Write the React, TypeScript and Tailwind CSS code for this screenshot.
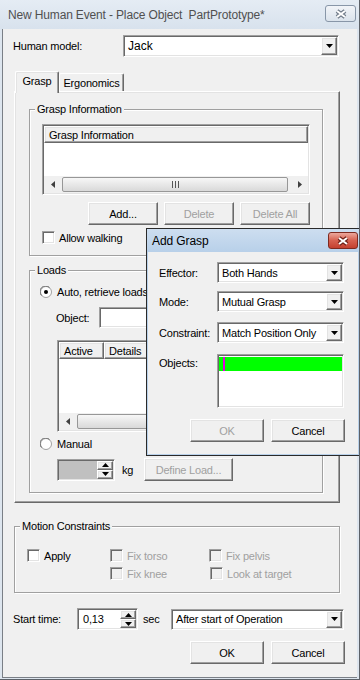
import React from 'react';

const raised =
  'border border-t-white border-l-white border-r-[#696969] border-b-[#696969] shadow-[inset_-1px_-1px_0_#a0a0a0,inset_1px_1px_0_#e3e3e3]';
const sunken =
  'border border-t-[#a0a0a0] border-l-[#a0a0a0] border-r-white border-b-white shadow-[inset_1px_1px_0_#696969,inset_-1px_-1px_0_#e3e3e3]';
const etched = 'border border-[#a0a0a0] shadow-[inset_1px_1px_0_#fff,1px_1px_0_#fff]';

function DownArrow() {
  return (
    <svg width="7" height="4" viewBox="0 0 7 4">
      <path d="M0 0h7L3.5 4z" fill="#000" />
    </svg>
  );
}

function Combo({ value, className }: { value: string; className: string }) {
  return (
    <div className={`${sunken} ${className} bg-white flex p-[1px]`}>
      <span className="flex-1 flex items-center pl-[3px] whitespace-nowrap overflow-hidden">{value}</span>
      <span className={`${raised} w-[16px] bg-[#f0f0f0] flex items-center justify-center`}>
        <DownArrow />
      </span>
    </div>
  );
}

function Btn({ label, className, disabled = false }: { label: string; className: string; disabled?: boolean }) {
  return (
    <button
      className={`${raised} ${className} bg-[#f0f0f0] flex items-center justify-center ${
        disabled ? 'text-[#a0a0a0]' : 'text-black'
      }`}
    >
      {label}
    </button>
  );
}

function Check({ label, disabled = false }: { label: string; disabled?: boolean }) {
  return (
    <div className="flex items-center gap-[4px] h-[13px]">
      <span className={`${sunken} w-[13px] h-[13px] shrink-0 ${disabled ? 'bg-[#f0f0f0]' : 'bg-white'}`} />
      <span className={`whitespace-nowrap ${disabled ? 'text-[#a0a0a0]' : ''}`}>{label}</span>
    </div>
  );
}

function Radio({ label, checked = false }: { label: string; checked?: boolean }) {
  return (
    <div className="flex items-center gap-[5px] h-[13px]">
      <svg width="12" height="12" viewBox="0 0 12 12" className="shrink-0">
        <circle cx="6" cy="6" r="5.5" fill="#fff" stroke="#a0a0a0" />
        <path d="M1.6 9.5A5 5 0 0 1 9.5 1.6" fill="none" stroke="#696969" />
        {checked && <circle cx="6" cy="6" r="2" fill="#000" />}
      </svg>
      <span className="whitespace-nowrap">{label}</span>
    </div>
  );
}

function Spin({ value, className, fieldBg }: { value: string; className: string; fieldBg: string }) {
  return (
    <div className={`${sunken} ${className} ${fieldBg} flex p-[1px]`}>
      <span className="flex-1 flex items-center pl-[4px]">{value}</span>
      <div className="w-[16px] flex flex-col">
        <span className={`${raised} flex-1 bg-[#f0f0f0] flex items-center justify-center`}>
          <svg width="7" height="4" viewBox="0 0 7 4">
            <path d="M0 4h7L3.5 0z" fill="#000" />
          </svg>
        </span>
        <span className={`${raised} flex-1 bg-[#f0f0f0] flex items-center justify-center`}>
          <DownArrow />
        </span>
      </div>
    </div>
  );
}

function HScroll({ thumb }: { thumb: string }) {
  return (
    <div className="h-[17px] flex bg-[#f0f0f0] shrink-0">
      <span className="w-[17px] flex items-center justify-center">
        <svg width="4" height="7" viewBox="0 0 4 7">
          <path d="M4 0v7L0 3.5z" fill="#404040" />
        </svg>
      </span>
      <div className="flex-1 flex items-center overflow-hidden">
        <div
          className={`${thumb} h-[15px] shrink-0 rounded-[2px] border border-[#979797] bg-linear-to-b from-[#f7f7f7] to-[#d9d9d9] flex items-center justify-center`}
        >
          <svg width="7" height="7" viewBox="0 0 7 7">
            <path d="M0.5 0v7M3.5 0v7M6.5 0v7" stroke="#555" />
          </svg>
        </div>
      </div>
      <span className="w-[17px] flex items-center justify-center">
        <svg width="4" height="7" viewBox="0 0 4 7">
          <path d="M0 0v7L4 3.5z" fill="#404040" />
        </svg>
      </span>
    </div>
  );
}

function Group({ title, className, children }: { title: string; className: string; children: React.ReactNode }) {
  return (
    <fieldset className={`${etched} ${className}`}>
      <legend className="ml-[5px] px-[2px] bg-[#f0f0f0]">{title}</legend>
      {children}
    </fieldset>
  );
}

function CloseGlyph({ outline }: { outline: string }) {
  return (
    <svg width="14" height="10" viewBox="0 0 14 10">
      <path d="M3 2L11 8M11 2L3 8" stroke={outline} strokeWidth="4.2" />
      <path d="M3 2L11 8M11 2L3 8" stroke="#fff" strokeWidth="2" />
    </svg>
  );
}

export default function App() {
  return (
    <div className="w-[360px] h-[680px] relative overflow-hidden flex flex-col bg-[#dde5ee] border-r border-b border-[#5c6168] font-['Liberation_Sans',Arial,sans-serif] text-[11px] leading-[14px] tracking-[-0.2px] text-black">
      {/* title bar */}
      <div className="h-[29px] shrink-0 flex items-start bg-linear-to-b from-[#e5ecf4] to-[#d8e2ed]">
        <span className="ml-[8px] mt-[7px] text-[12px] leading-[16px] tracking-[-0.15px] text-[#505050] whitespace-pre">
          New Human Event - Place Object  PartPrototype*
        </span>
        <span className="ml-auto mr-[3px] mt-[5px] w-[31px] h-[17px] rounded-[3px] border border-[#8896a8] bg-linear-to-b from-[#f1f4f8] to-[#dbe3ec] flex items-center justify-center">
          <CloseGlyph outline="#6f7a88" />
        </span>
      </div>

      {/* client area */}
      <div className="flex-1 ml-[2px] mr-[2px] mb-[1px] border-l border-b border-[#7a7f86] bg-[#f0f0f0] flex flex-col">
        <div className="mt-[6px] ml-[10px] flex items-center h-[22px]">
          <span className="w-[110px]">Human model:</span>
          <Combo value="Jack" className="w-[216px] h-[22px] text-[12px] tracking-normal" />
        </div>

        {/* tabs */}
        <div className="mt-[14px] ml-[12px] h-[20px] flex items-end">
          <div className="relative z-10 -mb-[2px] w-[44px] h-[22px] bg-[#f0f0f0] rounded-t-[2px] border-t border-l border-r border-t-white border-l-white border-r-[#696969] shadow-[inset_-1px_0_0_#a0a0a0,inset_1px_1px_0_#e3e3e3] flex justify-center pt-[2px]">
            Grasp
          </div>
          <div className="w-[65px] h-[18px] rounded-t-[2px] border-t border-l border-r border-t-white border-l-white border-r-[#696969] shadow-[inset_-1px_0_0_#a0a0a0] flex items-center justify-center">
            Ergonomics
          </div>
        </div>

        {/* tab panel */}
        <div className={`${raised} ml-[11px] w-[326px] h-[412px] bg-[#f0f0f0] flex flex-col`}>
          <Group title="Grasp Information" className="ml-[14px] mt-[10px] w-[294px] h-[154px]">
            <div className="px-[12px] pt-[8px] flex flex-col">
              <div className={`${sunken} h-[71px] bg-white p-[1px] flex flex-col`}>
                <div className="h-[17px] flex shrink-0">
                  <div className={`${raised} flex-1 bg-[#f0f0f0] flex items-center pl-[4px]`}>Grasp Information</div>
                </div>
                <div className="flex-1" />
                <HScroll thumb="ml-[1px] w-[226px]" />
              </div>
              <div className="mt-[7px] flex justify-end gap-[6px]">
                <Btn label="Add..." className="w-[70px] h-[23px]" />
                <Btn label="Delete" className="w-[70px] h-[23px]" disabled />
                <Btn label="Delete All" className="w-[70px] h-[23px]" disabled />
              </div>
              <div className="mt-[6px]">
                <Check label="Allow walking" />
              </div>
            </div>
          </Group>

          <Group title="Loads" className="ml-[14px] mt-[7px] w-[294px] h-[230px]">
            <div className="pl-[10px] pt-[8px] flex flex-col">
              <Radio label="Auto, retrieve loads" checked />
              <div className="mt-[9px] ml-[16px] flex items-center h-[21px]">
                <span className="w-[43px]">Object:</span>
                <div className={`${sunken} w-[211px] h-[21px] bg-white`} />
              </div>
              <div className={`${sunken} mt-[12px] ml-[17px] w-[253px] h-[92px] bg-white p-[1px] flex flex-col`}>
                <div className="h-[17px] flex shrink-0">
                  <div className={`${raised} w-[45px] bg-[#f0f0f0] flex items-center pl-[4px]`}>Active</div>
                  <div className={`${raised} w-[44px] bg-[#f0f0f0] flex items-center pl-[4px]`}>Details</div>
                  <div className={`${raised} flex-1 bg-[#f0f0f0]`} />
                </div>
                <div className="flex-1" />
                <HScroll thumb="ml-[1px] w-[180px]" />
              </div>
              <div className="mt-[5px]">
                <Radio label="Manual" />
              </div>
              <div className="mt-[8px] ml-[17px] flex items-center h-[23px]">
                <Spin value="" className="w-[58px] h-[22px]" fieldBg="bg-[#c0c0c0]" />
                <span className="ml-[7px] w-[22px]">kg</span>
                <Btn label="Define Load..." className="w-[89px] h-[23px]" disabled />
              </div>
            </div>
          </Group>
        </div>

        {/* motion constraints */}
        <Group title="Motion Constraints" className="ml-[11px] mt-[16px] w-[326px] h-[74px]">
          <div className="pl-[12px] pt-[16px] grid grid-cols-[83px_99px_1fr] gap-y-[5px]">
            <Check label="Apply" />
            <Check label="Fix torso" disabled />
            <Check label="Fix pelvis" disabled />
            <div />
            <Check label="Fix knee" disabled />
            <div className="ml-[1px]">
              <Check label="Look at target" disabled />
            </div>
          </div>
        </Group>

        {/* start time */}
        <div className="mt-[15px] ml-[10px] flex items-center h-[22px]">
          <span className="w-[64px]">Start time:</span>
          <Spin value="0,13" className="w-[61px] h-[22px]" fieldBg="bg-white" />
          <span className="ml-[5px] w-[28px]">sec</span>
          <Combo value="After start of Operation" className="w-[173px] h-[21px]" />
        </div>

        <div className="mt-[11px] pr-[12px] flex justify-end gap-[7px]">
          <Btn label="OK" className="w-[74px] h-[23px]" />
          <Btn label="Cancel" className="w-[74px] h-[23px]" />
        </div>
      </div>

      {/* Add Grasp dialog */}
      <div className="absolute left-[146px] top-[228px] w-[214px] h-[228px] border border-[#2a2a2a] bg-[#f0f0f0] shadow-[inset_0_0_0_1px_#b9d1ea] flex flex-col">
        <div className="h-[23px] shrink-0 flex items-start bg-linear-to-b from-[#cddef0] to-[#b8d0e9]">
          <span className="ml-[5px] mt-[4px] text-[12px] leading-[16px] tracking-[-0.1px]">Add Grasp</span>
          <span className="ml-auto mr-[1px] mt-[3px] w-[30px] h-[17px] rounded-[3px] border border-[#7e2a20] bg-linear-to-b from-[#eba79c] via-[#d6604f] to-[#c4402f] flex items-center justify-center">
            <CloseGlyph outline="#6d1f16" />
          </span>
        </div>
        <div className="pl-[12px] flex flex-col">
          <div className="mt-[10px] flex items-center h-[21px]">
            <span className="w-[58px]">Effector:</span>
            <Combo value="Both Hands" className="w-[127px] h-[21px]" />
          </div>
          <div className="mt-[8px] flex items-center h-[21px]">
            <span className="w-[58px]">Mode:</span>
            <Combo value="Mutual Grasp" className="w-[127px] h-[21px]" />
          </div>
          <div className="mt-[10px] flex items-center h-[21px]">
            <span className="w-[58px]">Constraint:</span>
            <Combo value="Match Position Only" className="w-[127px] h-[21px]" />
          </div>
          <div className="mt-[11px] flex items-start">
            <span className="w-[58px] pt-[2px]">Objects:</span>
            <div className={`${sunken} w-[127px] h-[54px] bg-white p-[1px]`}>
              <div className="mt-[1px] h-[14px] bg-[#00ff00] flex">
                <span className="ml-[4px] w-[2px] h-full bg-[#e000e0]" />
              </div>
            </div>
          </div>
          <div className="mt-[11px] flex gap-[7px] ml-[31px]">
            <Btn label="OK" className="w-[74px] h-[23px]" disabled />
            <Btn label="Cancel" className="w-[74px] h-[23px]" />
          </div>
        </div>
      </div>
    </div>
  );
}
